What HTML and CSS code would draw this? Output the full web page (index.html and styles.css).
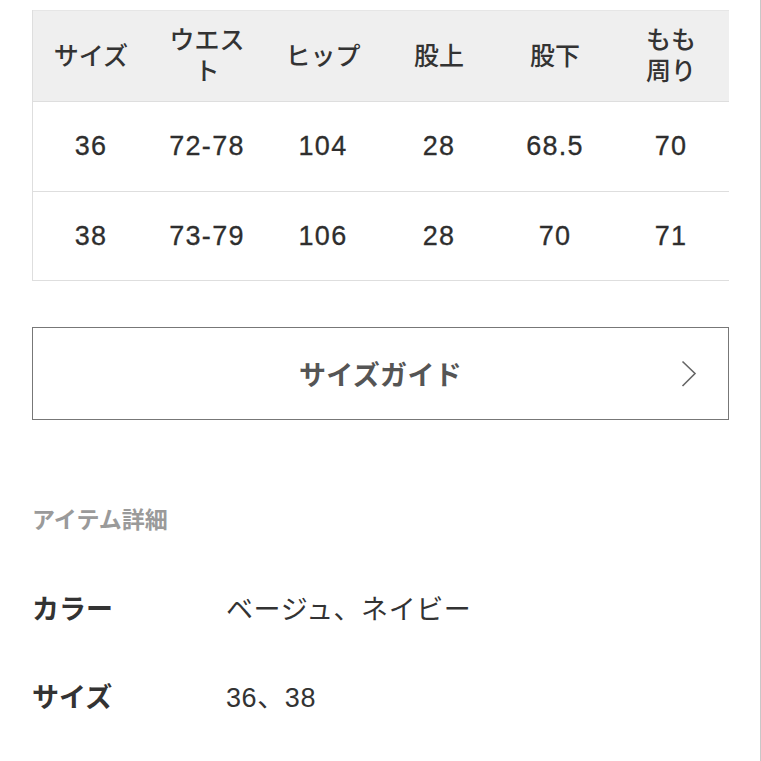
FILE: index.html
```html
<!DOCTYPE html>
<html lang="ja">
<head>
<meta charset="utf-8">
<link rel="stylesheet" href="styles.css">
</head>
<body>
<div class="page">
  <div class="size-table">
    <div class="row head">
      <div class="cell">サイズ</div>
      <div class="cell">ウエス<br>ト</div>
      <div class="cell">ヒップ</div>
      <div class="cell">股上</div>
      <div class="cell">股下</div>
      <div class="cell">もも<br>周り</div>
    </div>
    <div class="row body-row">
      <div class="cell num">36</div>
      <div class="cell num">72-78</div>
      <div class="cell num">104</div>
      <div class="cell num">28</div>
      <div class="cell num">68.5</div>
      <div class="cell num">70</div>
    </div>
    <div class="row body-row">
      <div class="cell num">38</div>
      <div class="cell num">73-79</div>
      <div class="cell num">106</div>
      <div class="cell num">28</div>
      <div class="cell num">70</div>
      <div class="cell num">71</div>
    </div>
  </div>

  <a class="guide-btn" href="#">
    <span class="guide-label">サイズガイド</span>
    <svg class="chev" width="16" height="28" viewBox="0 0 16 28" aria-hidden="true">
      <path d="M1.5 1.5 L14 13.5 L1.5 26" fill="none" stroke="#666" stroke-width="1.6"/>
    </svg>
  </a>

  <h2 class="section-title">アイテム詳細</h2>

  <dl class="details">
    <div class="detail-row">
      <dt>カラー</dt>
      <dd>ベージュ、ネイビー</dd>
    </div>
    <div class="detail-row">
      <dt>サイズ</dt>
      <dd>36、38</dd>
    </div>
  </dl>
</div>
</body>
</html>
```

FILE: styles.css
```css
html, body {
  margin: 0;
  padding: 0;
  background: #fff;
}

body {
  font-family: "Liberation Sans", "Noto Sans CJK JP", sans-serif;
  color: #333;
}

.page {
  box-sizing: border-box;
  width: 761px;
  min-height: 761px;
  padding: 10px 0 0 32px;
  border-right: 1px solid #c8c8c8;
}

.size-table {
  width: 697px;
  border-left: 1px solid #dedede;
  box-sizing: border-box;
}

.row {
  display: grid;
  grid-template-columns: repeat(6, 116px);
}

.head {
  height: 91px;
  background: #efefef;
  border-top: 1px solid #e6e6e6;
  box-sizing: border-box;
}

.body-row {
  height: 90px;
  border-top: 1px solid #dedede;
  box-sizing: border-box;
}

.body-row:last-child {
  border-bottom: 1px solid #dedede;
}

.cell {
  display: flex;
  align-items: center;
  justify-content: center;
  text-align: center;
  padding: 0 8px;
}

.head .cell {
  font-size: 25px;
  line-height: 31px;
  color: #333;
  font-weight: 500;
}

.num {
  font-size: 27px;
  letter-spacing: 1.3px;
  color: #2e2e2e;
  -webkit-text-stroke: 0.3px #2e2e2e;
}

.guide-btn {
  margin-top: 46px;
  width: 697px;
  height: 93px;
  box-sizing: border-box;
  border: 1.5px solid #777;
  display: flex;
  align-items: center;
  justify-content: center;
  position: relative;
  text-decoration: none;
}

.guide-label {
  font-size: 27px;
  font-weight: 700;
  color: #555;
  letter-spacing: 0.3px;
}

.chev {
  position: absolute;
  right: 31px;
  top: 32px;
}

.section-title {
  margin: 85px 0 0;
  font-size: 23px;
  line-height: 30px;
  font-weight: 700;
  color: #9a9a9a;
}

.details {
  margin: 60px 0 0;
}

.detail-row {
  display: grid;
  grid-template-columns: 194px 1fr;
  line-height: 30px;
  margin-bottom: 58px;
}

.detail-row dt {
  font-size: 27px;
  font-weight: 700;
  color: #333;
}

.detail-row dd {
  margin: 0;
  font-size: 27px;
  color: #333;
  letter-spacing: 0.6px;
}
```
